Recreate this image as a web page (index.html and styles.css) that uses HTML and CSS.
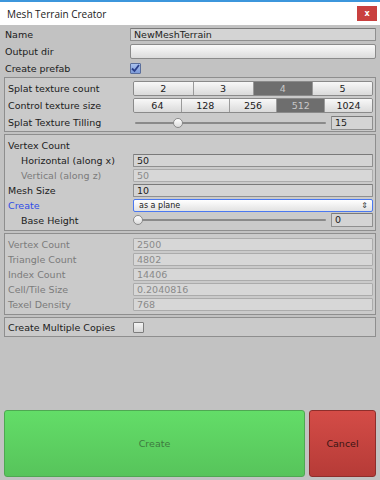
FILE: index.html
```html
<!DOCTYPE html>
<html lang="en">
<head>
    <meta charset="UTF-8">
    <title>Mesh Terrain Creator</title>
    <link rel="stylesheet" href="styles.css">
</head>
<body>
    <div class="window">
        <div class="titlebar">
            <span class="title">Mesh Terrain Creator</span>
            <span class="close">x</span>
        </div>

        <div class="content">
            <div class="row top">
                <span class="label">Name</span>
                <div class="field">NewMeshTerrain</div>
            </div>
            <div class="row top">
                <span class="label">Output dir</span>
                <div class="button-field"></div>
            </div>
            <div class="row top">
                <span class="label">Create prefab</span>
                <span class="checkbox checked">
                    <svg width="9" height="9" viewBox="0 0 9 9"><path d="M1 4.5 L3.5 7 L8 1" fill="none" stroke="#2a3f8a" stroke-width="1.8"/></svg>
                </span>
            </div>

            <div class="box textures">
                <div class="row tall">
                    <span class="label">Splat texture count</span>
                    <div class="toolbar">
                        <span class="tb">2</span>
                        <span class="tb">3</span>
                        <span class="tb selected">4</span>
                        <span class="tb">5</span>
                    </div>
                </div>
                <div class="row tall">
                    <span class="label">Control texture size</span>
                    <div class="toolbar">
                        <span class="tb">64</span>
                        <span class="tb">128</span>
                        <span class="tb">256</span>
                        <span class="tb selected">512</span>
                        <span class="tb">1024</span>
                    </div>
                </div>
                <div class="row tall">
                    <span class="label">Splat Texture Tilling</span>
                    <div class="slider">
                        <div class="track"><span class="thumb" style="left: 21%"></span></div>
                        <div class="field small">15</div>
                    </div>
                </div>
            </div>

            <div class="box">
                <div class="row"><span class="label">Vertex Count</span></div>
                <div class="row">
                    <span class="label indent">Horizontal (along x)</span>
                    <div class="field">50</div>
                </div>
                <div class="row">
                    <span class="label indent muted">Vertical (along z)</span>
                    <div class="field disabled">50</div>
                </div>
                <div class="row">
                    <span class="label">Mesh Size</span>
                    <div class="field">10</div>
                </div>
                <div class="row">
                    <span class="label link">Create</span>
                    <div class="popup">as a plane<span class="arrows">&#8661;</span></div>
                </div>
                <div class="row">
                    <span class="label indent">Base Height</span>
                    <div class="slider">
                        <div class="track"><span class="thumb" style="left: 0%"></span></div>
                        <div class="field small">0</div>
                    </div>
                </div>
            </div>

            <div class="box stats">
                <div class="row"><span class="label muted">Vertex Count</span><div class="field disabled">2500</div></div>
                <div class="row"><span class="label muted">Triangle Count</span><div class="field disabled">4802</div></div>
                <div class="row"><span class="label muted">Index Count</span><div class="field disabled">14406</div></div>
                <div class="row"><span class="label muted">Cell/Tile Size</span><div class="field disabled">0.2040816</div></div>
                <div class="row"><span class="label muted">Texel Density</span><div class="field disabled">768</div></div>
            </div>

            <div class="box copies">
                <div class="row">
                    <span class="label">Create Multiple Copies</span>
                    <span class="checkbox"></span>
                </div>
            </div>

            <div class="actions">
                <button class="btn create">Create</button>
                <button class="btn cancel">Cancel</button>
            </div>
        </div>
    </div>
</body>
</html>
```

FILE: styles.css
```css
* {
    margin: 0;
    padding: 0;
    box-sizing: border-box;
}

body {
    font-family: 'DejaVu Sans', Verdana, sans-serif;
    font-size: 9.5px;
    color: #202020;
    width: 380px;
    height: 480px;
    overflow: hidden;
}

.window {
    height: 480px;
    display: flex;
    flex-direction: column;
    border-top: 2px solid #3c96dc;
}

.titlebar {
    height: 23px;
    background: white;
    display: flex;
    align-items: center;
    justify-content: space-between;
    padding: 0 3px 0 7px;
}

.title {
    font-family: 'Open Sans', sans-serif;
    font-size: 10px;
    color: #1a1a1a;
}

.close {
    width: 20px;
    height: 15px;
    background: #c9403f;
    color: white;
    font-size: 8px;
    font-weight: bold;
    display: flex;
    align-items: center;
    justify-content: center;
}

.content {
    flex: 1;
    background: #c2c2c2;
    padding-top: 1px;
    display: flex;
    flex-direction: column;
}

.row {
    display: grid;
    grid-template-columns: 125px 1fr;
    align-items: center;
    height: 14px;
}

.row.top {
    padding: 0 4px 0 5px;
    height: 16px;
    margin-bottom: 1px;
}

.label {
    white-space: nowrap;
}

.label.indent {
    padding-left: 13px;
}

.label.muted {
    color: #7b7b7b;
}

.label.link {
    color: #2f4de6;
}

.field {
    height: 13px;
    background: #d4d4d4;
    border: 1px solid #8f8f8f;
    border-top-color: #7a7a7a;
    border-radius: 1px;
    padding: 0 3px;
    line-height: 11px;
    color: #222;
}

.field.disabled {
    background: #d7d7d7;
    border-color: #ababab;
    color: #8a8a8a;
}

.button-field {
    height: 15px;
    border: 1px solid #8a8a8a;
    border-radius: 2px;
    background: linear-gradient(#fafafa, #dcdcdc);
}

.checkbox {
    width: 11px;
    height: 11px;
    border: 1px solid #7d7d7d;
    border-radius: 1px;
    background: linear-gradient(#f4f4f4, #d6d6d6);
    display: flex;
    align-items: center;
    justify-content: center;
}

.checkbox.checked {
    background: linear-gradient(#a9c2ee, #7d9ad8);
    border-color: #5b6f9c;
}

.box {
    margin: 0 4px 2px 4px;
    border: 1px solid #8e8e8e;
    background: #cacaca;
    padding: 3px 2px 2px 3px;
}

.box.textures {
    padding-bottom: 1px;
}

.box .row {
    margin-bottom: 1px;
}

.box .row.tall {
    height: 15px;
    margin-bottom: 2px;
}

.box .row.tall:last-child {
    margin-bottom: 0;
}

.toolbar {
    display: flex;
    height: 15px;
    border: 1px solid #8a8a8a;
    border-radius: 2px;
    overflow: hidden;
}

.tb {
    flex: 1;
    text-align: center;
    line-height: 13px;
    background: linear-gradient(#f8f8f8, #dadada);
    border-left: 1px solid #9a9a9a;
}

.tb:first-child {
    border-left: none;
}

.tb.selected {
    background: #6e6e6e;
    color: #c8c8c8;
}

.slider {
    display: grid;
    grid-template-columns: 1fr 42px;
    gap: 5px;
    align-items: center;
}

.track {
    position: relative;
    height: 2px;
    background: #8a8a8a;
    border-radius: 1px;
    margin-left: 2px;
}

.thumb {
    position: absolute;
    top: -4px;
    width: 10px;
    height: 10px;
    margin-left: -2px;
    border-radius: 50%;
    border: 1px solid #8a8a8a;
    background: linear-gradient(#ffffff, #dcdcdc);
}

.field.small {
    height: 14px;
}

.popup {
    height: 13px;
    border: 1px solid #4a78f0;
    border-radius: 2px;
    background: linear-gradient(#ffffff, #e2e2e2);
    font-size: 8px;
    line-height: 11px;
    padding: 0 4px 0 5px;
    display: flex;
    justify-content: space-between;
}

.arrows {
    font-size: 8px;
    color: #333;
}

.box.copies {
    padding: 2px 2px 2px 3px;
}

.box.copies .row {
    height: 14px;
    margin-bottom: 0;
}

.actions {
    margin-top: auto;
    display: flex;
    gap: 4px;
    padding: 0 4px 3px 4px;
}

.btn {
    height: 67px;
    border-radius: 3px;
    font-family: 'DejaVu Sans', Verdana, sans-serif;
    font-size: 9.5px;
}

.btn.create {
    flex: 1;
    background: linear-gradient(#63dd68, #57c45b);
    border: 1px solid #4ea852;
    color: #3d7a3f;
}

.btn.cancel {
    width: 67px;
    background: linear-gradient(#d44c47, #b63b37);
    border: 1px solid #8e2e2b;
    color: #3a1513;
}
```
